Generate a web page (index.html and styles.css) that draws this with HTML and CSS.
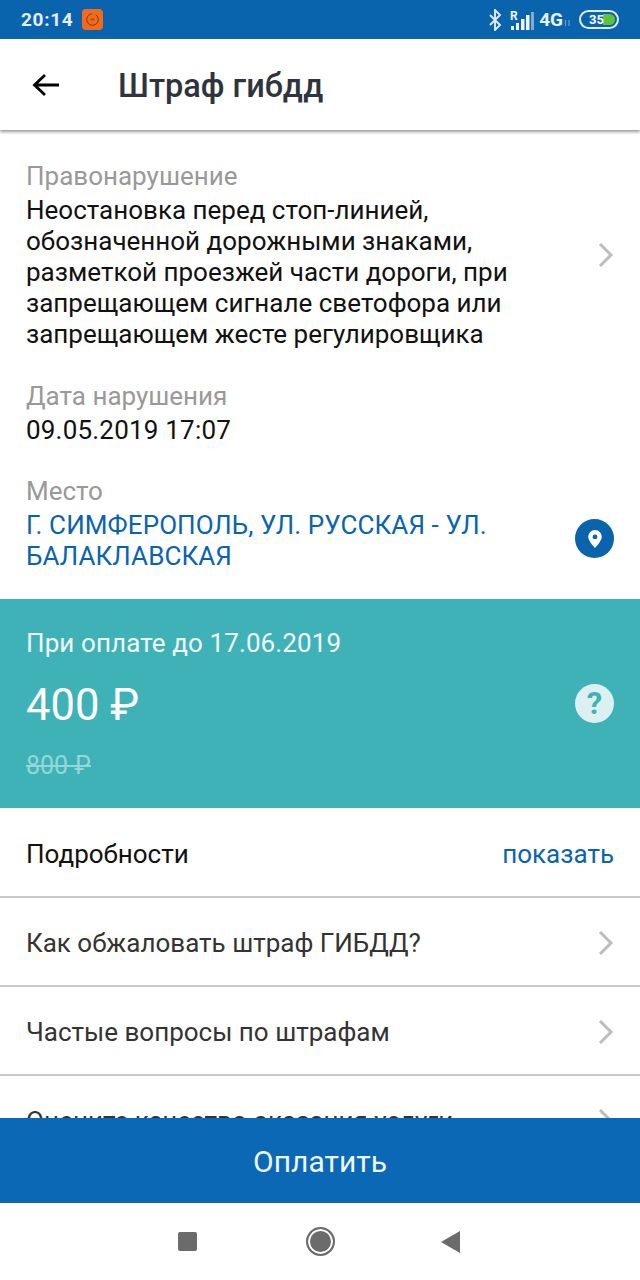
FILE: index.html
```html
<!DOCTYPE html>
<html lang="ru">
    <head>
        <meta charset="UTF-8">
        <title>Штраф гибдд</title>
        <link rel="stylesheet" href="styles.css">
    </head>
    <body>
        <div class="statusbar">
            <div class="status-left">
                <span class="time">20:14</span>
                <span class="app-icon">
                    <svg width="15" height="15" viewBox="0 0 15 15"><circle cx="7.500" cy="7.500" r="5.800" fill="none" stroke="#7a3a10" stroke-width="1" stroke-dasharray="26 4"/><rect x="5.500" y="6.500" width="4" height="2" fill="#a8521c"/></svg>
                </span>
            </div>
            <div class="status-right">
                <svg class="bt" width="14" height="22" viewBox="0 0 14 22"><path d="M2 6l10 10-5 5V1l5 5L2 16" fill="none" stroke="#dfeaf4" stroke-width="1.900"/></svg>
                <svg class="signal" width="25" height="22" viewBox="0 0 25 22"><text x="0" y="11" class="roam">R</text><rect x="1" y="17" width="3" height="4" fill="#eef4f9"/><rect x="6" y="14" width="3" height="7" fill="#eef4f9"/><rect x="11" y="10" width="3.500" height="11" fill="#eef4f9"/><rect x="16" y="6" width="3.500" height="15" fill="#eef4f9"/><rect x="21" y="3" width="3" height="18" fill="#7fabd0"/></svg>
                <span class="net">4G</span>
                <svg class="tiny-arrows" width="7" height="8" viewBox="0 0 7 8"><path d="M1.500 1v6M5 1v6" stroke="#6d9dc6" stroke-width="1.200"/></svg>
                <span class="battery"><span class="battery-fill"></span><span class="battery-num">35</span></span>
            </div>
        </div>

        <header class="topbar">
            <svg class="back" width="30" height="26" viewBox="0 0 30 26"><path d="M28 13H4M14 3L3.500 13 14 23" fill="none" stroke="#000" stroke-width="2.800"/></svg>
            <h1>Штраф гибдд</h1>
        </header>

        <main class="content">
            <section class="info">
                <div class="info-block">
                    <div class="info-text">
                        <p class="label">Правонарушение</p>
                        <p class="value">Неостановка перед стоп-линией, обозначенной дорожными знаками, разметкой проезжей части дороги, при запрещающем сигнале светофора или запрещающем жесте регулировщика</p>
                    </div>
                    <svg class="chevron" width="16" height="26" viewBox="0 0 16 26"><path d="M2 2l11 11L2 24" fill="none" stroke="#bdbdbd" stroke-width="3"/></svg>
                </div>
                <div class="info-block">
                    <div class="info-text">
                        <p class="label">Дата нарушения</p>
                        <p class="value date">09.05.2019 17:07</p>
                    </div>
                </div>
                <div class="info-block place-block">
                    <div class="info-text">
                        <p class="label">Место</p>
                        <p class="value place">Г. СИМФЕРОПОЛЬ, УЛ. РУССКАЯ - УЛ. БАЛАКЛАВСКАЯ</p>
                    </div>
                    <span class="pin">
                        <svg width="16" height="20" viewBox="0 0 16 20"><path fill-rule="evenodd" d="M8 1a6.800 6.800 0 0 0-6.800 6.800C1.200 12 8 19 8 19s6.800-7 6.800-11.200A6.800 6.800 0 0 0 8 1zm0 4.500a2.400 2.400 0 1 1 0 4.800 2.400 2.400 0 0 1 0-4.800z" fill="#fff"/></svg>
                    </span>
                </div>
            </section>

            <section class="pay-panel">
                <div class="pay-text">
                    <p class="pay-until">При оплате до 17.06.2019</p>
                    <p class="pay-sum">400 ₽</p>
                    <p class="pay-old">800 ₽</p>
                </div>
                <span class="help">?</span>
            </section>

            <section class="links">
                <div class="row">
                    <span class="row-dark">Подробности</span>
                    <span class="row-action">показать</span>
                </div>
                <div class="row">
                    <span>Как обжаловать штраф ГИБДД?</span>
                    <svg class="chevron" width="16" height="26" viewBox="0 0 16 26"><path d="M2 2l11 11L2 24" fill="none" stroke="#bdbdbd" stroke-width="3"/></svg>
                </div>
                <div class="row">
                    <span>Частые вопросы по штрафам</span>
                    <svg class="chevron" width="16" height="26" viewBox="0 0 16 26"><path d="M2 2l11 11L2 24" fill="none" stroke="#bdbdbd" stroke-width="3"/></svg>
                </div>
                <div class="row">
                    <span>Оцените качество оказания услуги</span>
                    <svg class="chevron" width="16" height="26" viewBox="0 0 16 26"><path d="M2 2l11 11L2 24" fill="none" stroke="#bdbdbd" stroke-width="3"/></svg>
                </div>
            </section>
        </main>

        <button type="button" class="pay-btn">Оплатить</button>

        <nav class="navbar">
            <span class="nav-square"></span>
            <span class="nav-circle"></span>
            <svg width="19" height="22" viewBox="0 0 19 22"><path d="M19 0v22L0 11z" fill="#6b6b6b"/></svg>
        </nav>
    </body>
</html>
```

FILE: styles.css
```css
* {
    box-sizing: border-box;
    margin: 0;
    padding: 0;
}
body {
    width: 640px;
    height: 1280px;
    display: flex;
    flex-direction: column;
    overflow: hidden;
    background: #fff;
    font-family: Roboto, sans-serif;
}
.statusbar {
    height: 39px;
    flex: none;
    display: flex;
    justify-content: space-between;
    align-items: center;
    background: #0a64ad;
    padding: 0 21px 0 21px;
}
.status-left, .status-right {
    display: flex;
    align-items: center;
}
.time {
    color: #e3eef7;
    font-size: 19px;
    font-weight: 700;
    letter-spacing: 0.7px;
}
.app-icon {
    width: 21px;
    height: 21px;
    margin-left: 9px;
    border-radius: 4px;
    background: #f26a1b;
    display: flex;
    align-items: center;
    justify-content: center;
}
.bt {
    margin-right: 8px;
}
.roam {
    font-family: Roboto, sans-serif;
    font-size: 12px;
    font-weight: 700;
    fill: #eef4f9;
}
.net {
    color: #e9f1f8;
    font-size: 19px;
    font-weight: 700;
    margin-left: 4px;
}
.tiny-arrows {
    margin: 6px 0 0 1px;
}
.battery {
    position: relative;
    width: 40px;
    height: 19px;
    margin-left: 8px;
    border: 2px solid #dfeaf4;
    border-radius: 10px;
    display: flex;
    align-items: center;
    overflow: hidden;
}
.battery-fill {
    position: absolute;
    top: 2px;
    bottom: 2px;
    left: 22px;
    width: 12px;
    border-radius: 0 6px 6px 0;
    background: #5cc43a;
}
.battery-num {
    position: relative;
    margin-left: 8px;
    color: #fff;
    font-size: 13px;
    font-weight: 700;
}
.topbar {
    height: 91px;
    flex: none;
    position: relative;
    z-index: 1;
    display: flex;
    align-items: center;
    background: #fff;
    box-shadow: 0 2px 3px rgba(0, 0, 0, 0.4);
    padding-left: 31px;
}
.topbar h1 {
    margin: 2px 0 0 57px;
    color: #2e343d;
    font-size: 32.500px;
    font-weight: 500;
}
.content {
    flex: 1;
    min-height: 0;
    overflow: hidden;
}
.info {
    height: 469px;
    padding: 30px 26px 0 26px;
}
.info-block {
    display: flex;
    align-items: center;
    justify-content: space-between;
    margin-bottom: 29.500px;
}
.place-block {
    align-items: flex-end;
}
.info-text {
    flex: 1;
}
.label {
    color: #999;
    font-size: 26px;
    line-height: 32px;
    margin-bottom: 3px;
}
.value {
    color: #111;
    font-size: 26px;
    line-height: 31px;
    width: 520px;
}
.date {
    letter-spacing: 0.2px;
}
.place {
    color: #0a64ad;
    letter-spacing: 0.1px;
}
.pin {
    width: 39px;
    height: 39px;
    margin-bottom: 14px;
    border-radius: 50%;
    background: #0a64ad;
    display: flex;
    align-items: center;
    justify-content: center;
    flex: none;
}
.chevron {
    flex: none;
}
.pay-panel {
    height: 209px;
    display: flex;
    align-items: center;
    justify-content: space-between;
    background: #3fb2b7;
    padding: 0 26px 0 26px;
    color: #fff;
}
.pay-text {
    padding-top: 2px;
}
.pay-until {
    font-size: 26px;
    line-height: 31px;
    letter-spacing: 0.1px;
    color: #f1fafa;
}
.pay-sum {
    font-size: 43.500px;
    line-height: 53px;
    margin-top: 20px;
}
.pay-old {
    font-size: 25px;
    line-height: 31px;
    margin-top: 18px;
    color: #93d7d6;
    text-decoration: line-through;
}
.help {
    width: 39px;
    height: 39px;
    border-radius: 50%;
    background: #dcf0f1;
    color: #3fb2b7;
    font-size: 31px;
    font-weight: 700;
    display: flex;
    align-items: center;
    justify-content: center;
}
.links {
    padding-top: 1px;
}
.row {
    height: 89px;
    display: flex;
    align-items: center;
    justify-content: space-between;
    padding: 2px 26px 0 26px;
    border-bottom: 2px solid #c9c9c9;
    color: #333;
    font-size: 26px;
}
.row-dark {
    color: #111;
}
.row-action {
    color: #0a64ad;
}
.pay-btn {
    height: 85px;
    flex: none;
    border: none;
    padding-top: 2px;
    background: #0a68b4;
    color: #eef5fa;
    font-family: Roboto, sans-serif;
    font-size: 30px;
}
.navbar {
    height: 77px;
    flex: none;
    display: flex;
    align-items: center;
    background: #fff;
    padding-left: 178px;
}
.nav-square {
    width: 19px;
    height: 19px;
    border-radius: 2px;
    background: #6b6b6b;
}
.nav-circle {
    width: 29px;
    height: 29px;
    margin: 0 106px 0 109px;
    border-radius: 50%;
    background: #6b6b6b;
    border: 2px solid #6b6b6b;
    box-shadow: inset 0 0 0 2px #fff;
}
```
